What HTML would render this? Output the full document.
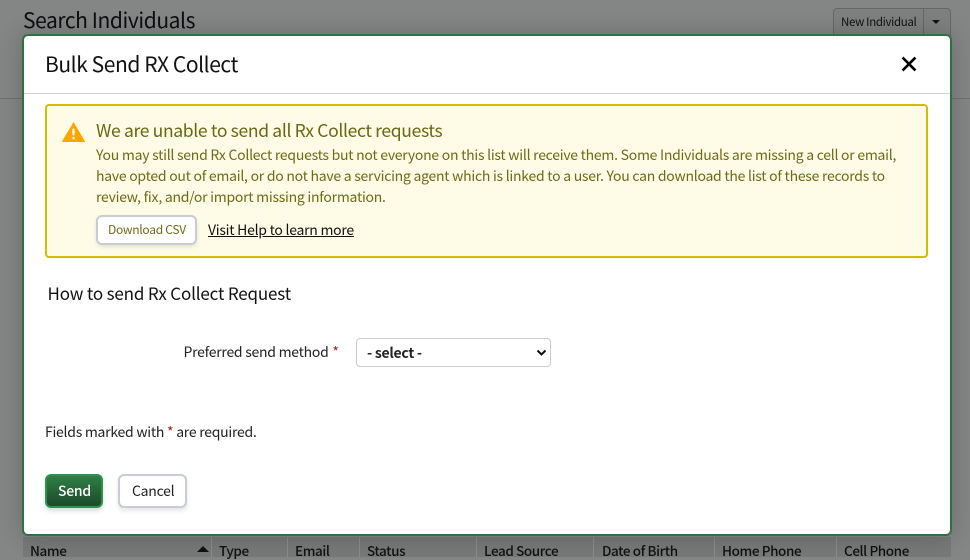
<!DOCTYPE html>
<html><head><meta charset="utf-8"><title>Bulk Send RX Collect</title>
<style>
html,body{margin:0;padding:0}
body{width:970px;height:557px;overflow:hidden;position:relative;background:#848585;font-family:"Noto Sans CJK JP","Liberation Sans",sans-serif;color:#111}
.t{position:absolute;white-space:nowrap}
.s{font-size:14px;letter-spacing:-.26px}
.b{position:absolute;box-sizing:border-box}
.th{position:absolute;top:541px;font-size:13.5px;letter-spacing:-.4px;line-height:18px;font-weight:500;color:#111;white-space:nowrap}
.sep{position:absolute;top:537px;height:20px;width:1px;background:#8a8b8b}
.req{color:#b01515}
</style></head><body>
<div class="t" style="left:23px;top:6px;font-size:21px;letter-spacing:-.42px;line-height:28px;color:#0c0e10">Search Individuals</div>
<div class="b" style="left:0;top:98px;width:970px;height:1px;background:#6f7070"></div>
<div class="b" style="left:833px;top:8px;width:118px;height:30px;border:1px solid #666;border-radius:4px;background:#7e7f7f"></div>
<div class="b" style="left:923px;top:8px;width:1px;height:30px;background:#666"></div>
<div class="t" style="left:841px;top:13px;font-size:11.5px;letter-spacing:-.34px;line-height:18px">New Individual</div>
<div class="b" style="left:932px;top:20px;width:0;height:0;border-left:4px solid transparent;border-right:4px solid transparent;border-top:4px solid #111"></div>

<div class="b" style="left:23px;top:537px;width:928px;height:20px;background:#777878"></div>
<div class="sep" style="left:211px"></div><div class="sep" style="left:287px"></div><div class="sep" style="left:359px"></div><div class="sep" style="left:476px"></div><div class="sep" style="left:593px"></div><div class="sep" style="left:714px"></div><div class="sep" style="left:836px"></div>
<div class="th" style="left:30px">Name</div>
<div class="b" style="left:197px;top:546px;width:0;height:0;border-left:6px solid transparent;border-right:6px solid transparent;border-bottom:6px solid #111"></div>
<div class="th" style="left:219px">Type</div>
<div class="th" style="left:295px">Email</div>
<div class="th" style="left:367px">Status</div>
<div class="th" style="left:484px">Lead Source</div>
<div class="th" style="left:602px">Date of Birth</div>
<div class="th" style="left:722px">Home Phone</div>
<div class="th" style="left:844px">Cell Phone</div>

<div class="b" style="left:22px;top:34px;width:930px;height:502px;background:#fff;border:2px solid #2c7342;border-radius:6px;box-shadow:0 0 24px rgba(0,0,0,.2)"></div>
<div class="t" style="left:45px;top:50px;font-size:21px;letter-spacing:-.43px;line-height:28px;color:#111">Bulk Send RX Collect</div>
<svg class="b" style="left:901px;top:56px" width="16" height="16" viewBox="0 0 16 16"><path d="M1.6 1.6L14.4 14.4M14.4 1.6L1.6 14.4" stroke="#000" stroke-width="2.6" fill="none"/></svg>
<div class="b" style="left:24px;top:93px;width:926px;height:1px;background:#d2d3d3"></div>

<div class="b" style="left:45px;top:104px;width:883px;height:154px;background:#fefce6;border:2px solid #cfbf00;border-radius:4px"></div>
<svg class="b" style="left:62px;top:122px" width="23" height="20" viewBox="0 0 23 20"><path d="M11.5 1L22.5 19.5H.5Z" fill="#ffa500" stroke="#ffa500" stroke-width="1" stroke-linejoin="round"/><rect x="10.4" y="6.5" width="2.2" height="7" rx="1" fill="#fff"/><circle cx="11.5" cy="16" r="1.3" fill="#fff"/></svg>
<div class="t" style="left:96px;top:119px;font-size:17.5px;letter-spacing:-.34px;line-height:24px;color:#6b6612">We are unable to send all Rx Collect requests</div>
<div class="t s" style="left:96px;top:145px;line-height:21px;color:#6f6a17">You may still send Rx Collect requests but not everyone on this list will receive them. Some Individuals are missing a cell or email,<br>have opted out of email, or do not have a servicing agent which is linked to a user. You can download the list of these records to<br>review, fix, and/or import missing information.</div>
<div class="b" style="left:96px;top:215px;width:101px;height:30px;background:#fff;border:2px solid #c8ccd6;border-radius:6px;box-shadow:0 2px 4px rgba(0,0,0,.1)"></div>
<div class="t" style="left:108px;top:221px;font-size:12px;letter-spacing:-.28px;line-height:18px;color:#6f6a17">Download CSV</div>
<div class="t s" style="left:208px;top:220px;line-height:20px;color:#111;text-decoration:underline">Visit Help to learn more</div>

<div class="t" style="left:47.5px;top:281px;font-size:17px;letter-spacing:-.17px;line-height:23px;color:#111">How to send Rx Collect Request</div>
<div class="t s" style="left:183.5px;top:342px;line-height:20px;color:#222">Preferred send method <span class="req" style="margin-left:1px">*</span></div>
<div class="b" style="left:356px;top:338px;width:195px;height:29px;background:#fff;border:1px solid #c8ccd6;border-radius:4px"></div>
<div class="t s" style="left:367px;top:343px;line-height:20px;font-weight:600;color:#222">- select -</div>
<svg class="b" style="left:536px;top:349px" width="11" height="8" viewBox="0 0 11 8"><path d="M1.5 1.5L5.5 5.5L9.5 1.5" stroke="#111" stroke-width="2" fill="none"/></svg>
<div class="t s" style="left:45px;top:422px;line-height:20px;color:#222">Fields marked with <span class="req">*</span> are required.</div>
<div class="b" style="left:45px;top:474px;width:58px;height:34px;background:linear-gradient(#2f7f46,#1c4a28);border:2px solid #2f9150;border-radius:6px;box-shadow:0 3px 5px rgba(0,0,0,.15)"></div>
<div class="t s" style="left:58px;top:481px;line-height:20px;font-weight:500;color:#fff">Send</div>
<div class="b" style="left:118px;top:474px;width:69px;height:34px;background:#fff;border:2px solid #c8ccd6;border-radius:6px;box-shadow:0 3px 5px rgba(0,0,0,.1)"></div>
<div class="t s" style="left:132px;top:481px;line-height:20px;color:#222">Cancel</div>
</body></html>
